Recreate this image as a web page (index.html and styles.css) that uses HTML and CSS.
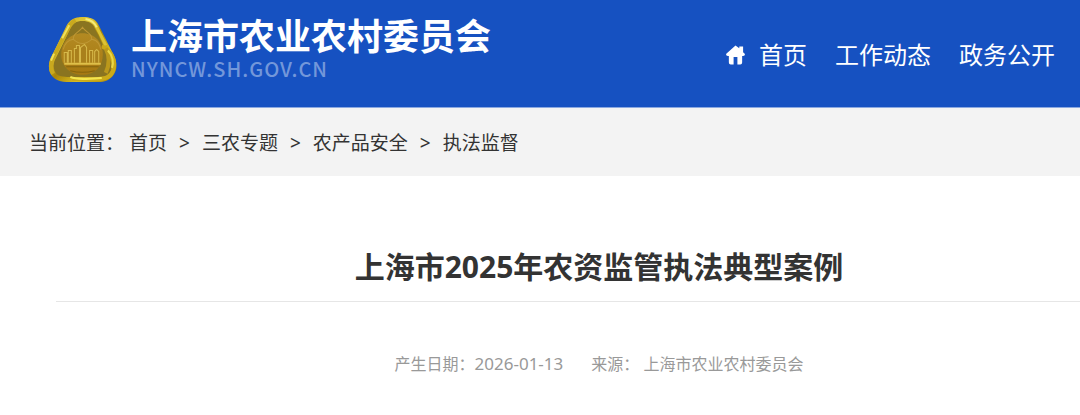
FILE: index.html
```html
<!DOCTYPE html>
<html lang="zh-CN">
<head>
    <meta charset="UTF-8">
    <meta name="viewport" content="width=device-width, initial-scale=1.0">
    <title>上海市2025年农资监管执法典型案例</title>
    <link rel="stylesheet" href="styles.css">
</head>
<body>

    <header class="header">
        <a href="#" class="logo">
            <svg class="emblem" viewBox="0 0 68 66" aria-hidden="true">
                <defs>
                    <linearGradient id="rim" x1="0" y1="0" x2="1" y2="1">
                        <stop offset="0" stop-color="#b8920f"/>
                        <stop offset="0.3" stop-color="#e3cb3a"/>
                        <stop offset="0.5" stop-color="#a98408"/>
                        <stop offset="0.7" stop-color="#d8bc22"/>
                        <stop offset="1" stop-color="#a58007"/>
                    </linearGradient>
                    <linearGradient id="disc" x1="0" y1="0" x2="0" y2="1">
                        <stop offset="0" stop-color="#b38a22"/>
                        <stop offset="1" stop-color="#a67812"/>
                    </linearGradient>
                </defs>
                <path d="M34 1C42 1 47 3 50 9L59 27L65 39C69 47 68 55 63 60C60 63 56 65 50 65H18C10 65 5 62 2 56C0 51 1 45 4 39L18 10C21 4 26 1 34 1Z" fill="url(#rim)"/>
                <path d="M34 5C40 5 44 7 46 12L61 42C64 49 63 55 59 58C57 60 53 60 49 60H19C13 60 9 59 7 55C5 51 5 46 8 41L22 12C24 7 28 5 34 5Z" fill="#8a7420"/>
                <!-- overlapping bands -->
                <path d="M31 3C41 2 46 5 48 11L57 29" fill="none" stroke="#dcc335" stroke-width="3"/>
                <path d="M37 3C43 4 46 7 48 11" fill="none" stroke="#f6ec78" stroke-width="2"/>
                <path d="M27 4C21 8 20 12 17 18L6 39C2 46 2 52 5 57" fill="none" stroke="#c9a91e" stroke-width="4"/>
                <path d="M21 9L14 22M6 37L3 44" fill="none" stroke="#f0e05a" stroke-width="2"/>
                <path d="M53 30C61 33 66 41 65 50C64 58 59 62 50 62H24" fill="none" stroke="#cbaa18" stroke-width="4"/>
                <path d="M22 60C28 63 40 62 53 61" fill="none" stroke="#f3e551" stroke-width="2"/>
                <path d="M57 32C61 40 61 47 57 56" fill="none" stroke="#bb981b" stroke-width="4"/>
                <path d="M59 34C64 39 65 46 63 51" fill="none" stroke="#e9d748" stroke-width="2"/>
                <path d="M34 17C46 17 54 26 54 38C54 50 46 58 34 58C22 58 13 50 13 38C13 26 22 17 34 17Z" fill="url(#disc)"/>
                <path d="M25 23C24 17 31 16 34 11C37 16 44 17 43 23C50 24 51 29 52 33M25 23C18 24 16 29 15 33M25 23Q34 31 43 23" fill="none" stroke="#bf9835" stroke-width="1"/>
                <!-- towers and water -->
                <path d="M16 46V36H19V46M20 46V34H23V46M26 46V32H28V29H31V46M32 46V31L36 28L38 31V46M41 46V34H44V46M46 46V35L48 33L50 35V46" fill="#a9801c" stroke="#d6b84a" stroke-width="1"/>
                <path d="M16 47H52" fill="none" stroke="#dfbf49" stroke-width="2"/>
                <path d="M18 50H50M22 54Q34 57 46 54" fill="none" stroke="#84640e" stroke-width="1"/>
            </svg>
            <span class="logo-text">
                <span class="logo-name">上海市农业农村委员会</span>
                <span class="logo-domain">NYNCW.SH.GOV.CN</span>
            </span>
        </a>
        <nav class="nav">
            <a href="#" class="nav-home">
                <svg class="home-icon" viewBox="0 0 20 20" aria-hidden="true">
                    <path d="M10 0L0 9Q0 11 2 11H3V18Q3 20 5 20H8V12H12V20H15Q17 20 17 18V11H18Q20 11 20 9L18 7V1H14V3Z" fill="#fff"/>
                </svg>
                首页
            </a>
            <a href="#">工作动态</a>
            <a href="#">政务公开</a>
        </nav>
    </header>

    <div class="breadcrumb">
        <span class="label">当前位置：</span>
        <a href="#">首页</a>
        <span class="sep">&gt;</span>
        <a href="#">三农专题</a>
        <span class="sep">&gt;</span>
        <a href="#">农产品安全</a>
        <span class="sep">&gt;</span>
        <a href="#">执法监督</a>
    </div>

    <main class="article">
        <h1>上海市2025年农资监管执法典型案例</h1>
        <div class="meta">
            <span>产生日期：<time datetime="2026-01-13">2026-01-13</time></span>
            <span>来源： 上海市农业农村委员会</span>
        </div>
    </main>

</body>
</html>
```
FILE: styles.css
```css
body {
    margin: 0;
    font-family: "Noto Sans", "Noto Sans CJK SC", sans-serif;
    background-color: #fff;
    color: #333;
}
a {
    color: inherit;
    text-decoration: none;
}
.header {
    display: flex;
    justify-content: space-between;
    align-items: flex-start;
    padding: 16px 25px 24px 48px;
    background-color: #1651c1;
    border-bottom: 1px solid #8ba8e0;
    color: #fff;
}
.logo {
    display: flex;
    gap: 14px;
}
.emblem {
    width: 69px;
    height: 67px;
}
.logo-text {
    display: flex;
    flex-direction: column;
}
.logo-name {
    font-family: "Liberation Sans", "Noto Sans CJK SC", sans-serif;
    font-size: 36px;
    line-height: 44px;
    font-weight: bold;
}
.logo-domain {
    font-family: "Noto Sans CJK SC", sans-serif;
    font-size: 20px;
    line-height: 18px;
    font-weight: 500;
    letter-spacing: 1px;
    color: #7397da;
}
.nav {
    display: flex;
    gap: 28px;
    padding-top: 21px;
    font-size: 24px;
    line-height: 36px;
}
.nav-home {
    display: flex;
    align-items: center;
    gap: 14px;
}
.home-icon {
    width: 19px;
    height: 20px;
}
.breadcrumb {
    display: flex;
    gap: 12px;
    padding: 20px 29px 18px;
    background-color: #f3f3f3;
    font-size: 19px;
    line-height: 30px;
}
.breadcrumb .label {
    margin-right: -7px;
}
.article {
    padding: 64px 0 24px 56px;
}
h1 {
    margin: 0;
    padding: 7px 0 14px 62px;
    border-bottom: 1px solid #e6e6e6;
    font-size: 30px;
    line-height: 40px;
    text-align: center;
}
.meta {
    display: flex;
    justify-content: center;
    gap: 28px;
    padding: 50px 0 0 62px;
    font-size: 16px;
    line-height: 24px;
    color: #999;
}
.meta time {
    font-size: 17px;
}
```
